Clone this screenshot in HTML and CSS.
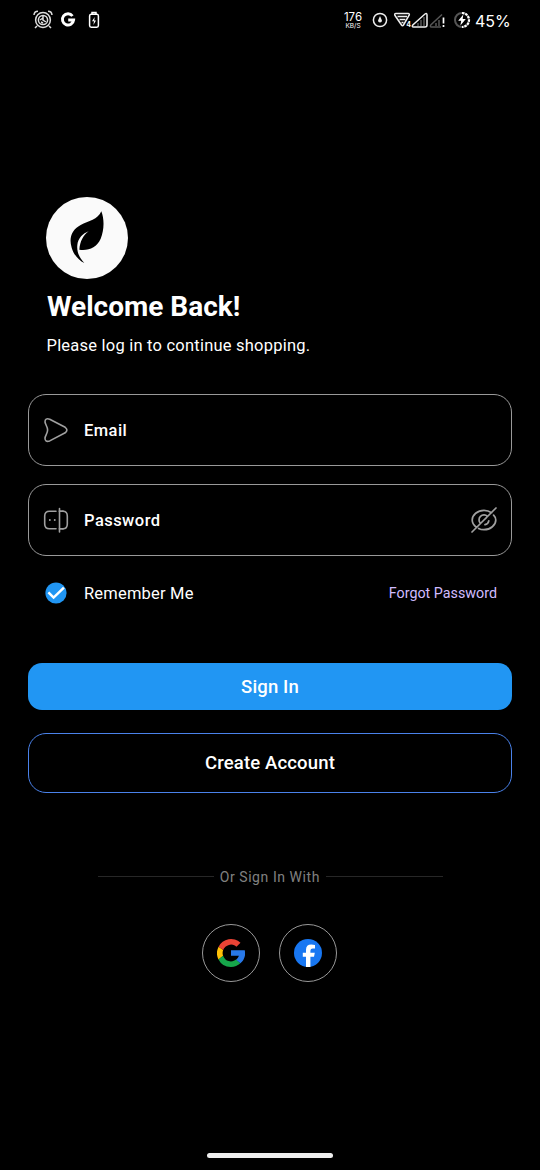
FILE: index.html
```html
<!DOCTYPE html>
<html lang="en">
<head>
<meta charset="utf-8">
<title>Sign In</title>
<link rel="stylesheet" href="styles.css">
</head>
<body>
<div class="screen">
  <header class="status">
    <div class="status-left">
      <svg width="20" height="20" viewBox="0 0 20 20" fill="none" stroke="#ddd" stroke-width="1.5"><circle cx="10" cy="10" r="7.4"/><circle cx="10" cy="10" r="4.6"/><path d="M10 6v4l3 2M7 10l3-2M10 13l-2-1M1 5a4 4 0 0 1 4-3.7M19 5a4 4 0 0 0-4-3.7M4 16l-2 2M16 16l2 2"/></svg>
      <svg class="mono-g" width="16" height="16" viewBox="0 0 16 16" fill="none" stroke="#fff" stroke-width="2.9"><path d="M12.5 4A5.6 5.6 0 1 0 13.6 8H8.2"/></svg>
      <svg class="mini-battery" width="12" height="18" viewBox="0 0 12 18" fill="none" stroke="#fff" stroke-width="1.5"><path d="M4 3V1.5h4V3M3 3.2h6Q10.4 3.2 10.4 5v9.5q0 1.7-1.6 1.7H3.2q-1.6 0-1.6-1.7V5Q1.6 3.2 3 3.2Z"/><path d="M6.7 6 4 10.3h2L5.4 14 8 9.4H6.2Z" fill="#fff" stroke="none"/></svg>
    </div>
    <div class="status-right">
      <div class="speed"><span class="speed-value">176</span><span class="speed-unit">KB/S</span></div>
      <svg class="dial" width="16" height="16" viewBox="0 0 16 16" fill="none" stroke="#eee" stroke-width="1.5"><circle cx="8" cy="8" r="6.6"/><path d="M8 4 10 8.4A2 2 0 1 1 6 8.4Z" fill="#eee" stroke="none"/></svg>
      <svg class="signals" width="52" height="18" viewBox="0 0 52 18" fill="none" stroke="#eee" stroke-width="1.5"><path d="M2 2.5H14Q16 2.5 15 4.5L9.5 14Q8.5 15.5 7.5 14L1 4.5Q0 2.5 2 2.5ZM3.5 5.5h9.5M5.5 8.5h5.8M7.5 11.4h2"/><path d="M19.5 16H31q2 0 2-2V4q0-2.4-2-1L18.8 14Q17.5 16 19.5 16Z"/><path d="M24 12v3M27 9v6M30 6v9M42 12v3M45 9v6" stroke="#555"/><path d="M48 3.5 37 13.7Q35.5 16 37.5 16H47" stroke="#555"/><path d="M49.5 6.5v6M49.5 14v2" stroke="#fff" stroke-width="1.7"/><text class="network" x="12.2" y="16.4">4</text></svg>
      <svg class="charge" width="18" height="18" viewBox="0 0 18 18" fill="none"><circle cx="9" cy="9" r="7" stroke="#555" stroke-width="2"/><path d="M9 2A7 7 0 0 1 9 16" stroke="#fff" stroke-width="2.2" stroke-dasharray="2.4 1"/><path d="M10.3 3.5 5.2 9.8h3L7.4 14.6 12.8 8H9.7Z" fill="#fff"/></svg>
      <span class="percent">45%</span>
    </div>
  </header>

  <main class="content">
    <section class="intro">
      <svg class="logo" viewBox="34 36 246 246"><circle cx="157" cy="159" r="123" fill="#fafafa"/><path d="M200 79C190 104 161 108 138 120C111 134 102 160 111 188C117 209 132 226 149 234C133 216 126 201 128 180C130 160 145 145 162 139C146 151 136 168 134 194C161 198 186 188 198 161C208 137 210 105 200 79Z"/></svg>
      <h1 class="title">Welcome Back!</h1>
      <p class="subtitle">Please log in to continue shopping.</p>
    </section>

    <div class="field">
      <svg class="field-icon" width="28" height="28" viewBox="0 0 28 28" fill="none" stroke="#a0a0a0" stroke-width="1.6" stroke-linejoin="round"><path d="M7.7 3.2 23.2 11.3Q26.6 14 23.2 16.8L7.7 24.9Q3 26.5 3 22.2C3.2 19.7 5.6 17.5 5.6 14S3.2 8.6 3 5.9Q3 1.7 7.7 3.2Z"/></svg>
      <span class="label">Email</span>
    </div>
    <div class="field">
      <svg class="field-icon" width="28" height="28" viewBox="0 0 28 28" fill="none" stroke="#a0a0a0" stroke-width="1.6" stroke-linecap="round"><path d="M14 22.8H7.5Q2.7 22.8 2.7 18V10Q2.7 5.2 7.5 5.2H14M21 5.2Q25.3 5.2 25.3 10V18Q25.3 22.8 21 22.8M17.5 2.5v23.5"/><path d="M17.5 5.2H21M17.5 22.8H21M7.8 14h.1M12.7 14h.1" stroke-width="1.8"/></svg>
      <span class="label">Password</span>
      <svg class="eye" width="28" height="28" viewBox="0 0 28 28" fill="none" stroke="#a0a0a0" stroke-width="1.7" stroke-linecap="round"><path d="M21.6 6.7C19.6 5.3 17 4.3 14 4.3C7.5 4.3 2.2 9 2.2 14C2.2 16.8 3.8 19.3 6.4 21.2M23.6 9.2C25 10.6 25.8 12.3 25.8 14C25.8 19 20.5 23.7 14 23.7C11.8 23.7 10 23.2 8.6 22.4M17.5 10.4A4.9 4.9 0 0 0 10.5 17.5M18.8 14.8A4.9 4.9 0 0 1 15 18.7M14 14l2.2-2.2M26 2 2 26"/></svg>
    </div>

    <div class="options">
      <svg class="check" width="22" height="22" viewBox="0 0 22 22" fill="none"><circle cx="11" cy="11" r="10.6" fill="#2196f3"/><path d="M3.4 10.4 8.6 15.6 18.9 5.6" stroke="#fff" stroke-width="2.5"/></svg>
      <span class="remember">Remember Me</span>
      <a class="forgot">Forgot Password</a>
    </div>

    <button class="btn primary">Sign In</button>
    <button class="btn outline">Create Account</button>

    <div class="divider"><span class="rule"></span><span class="divider-text">Or Sign In With</span><span class="rule"></span></div>

    <div class="social">
      <button class="round">
        <svg width="28" height="28" viewBox="2 2 44 44"><path fill="#ffc107" d="M4.5 14.1A22 22 0 0 0 4.3 34.1L11.6 28.5A13.2 13.2 0 0 1 11.7 19.3Z"/><path fill="#ea4335" d="m4.5 14.1 7.2 5.2A13.2 13.2 0 0 1 32.6 14l6.3-6.3A22 22 0 0 0 4.5 14.1Z"/><path fill="#16a64a" d="M24 46a22 22 0 0 0 14.8-5.8L32 34.4A13.1 13.1 0 0 1 11.6 28.5l-7.3 5.6A22 22 0 0 0 24 46Z"/><path fill="#2878e8" d="M45.6 19.6H24v8.8h12.5a13.3 13.3 0 0 1-4.5 6.1l6.8 5.8A21.5 21.5 0 0 0 45.6 19.6Z"/></svg>
      </button>
      <button class="round">
        <svg width="28" height="28" viewBox="0 0 28 28"><circle cx="14" cy="14" r="14" fill="#1877f2"/><path fill="#fff" d="M12 28V17.8H8.8V13.8H12V10.7Q12 5.5 17.3 5.5Q19.2 5.5 21 6V9.6H18.8Q16.4 9.6 16.4 11.8V13.8H20.8L20 17.8H16.4V28Z"/></svg>
      </button>
    </div>
  </main>
  <div class="home-bar"></div>
</div>
</body>
</html>
```
FILE: styles.css
```css
* { box-sizing: border-box; }
body { margin: 0; background: #000; color: #fff; font-family: Roboto, sans-serif; }
svg { display: block; flex: none; }
.screen { width: 540px; height: 1170px; display: flex; flex-direction: column; overflow: hidden; }
.status { height: 40px; display: flex; justify-content: space-between; padding: 0 30px 0 33px; }
.status-left, .status-right { display: flex; align-items: center; }
.mono-g { margin-left: 7px; }
.mini-battery { margin-left: 12px; }
.speed { width: 20px; display: flex; flex-direction: column; align-items: center; }
.speed-value { font: 11.5px/11px Inter, sans-serif; margin-top: 1px; }
.speed-unit { font: 6.5px/7px Inter, sans-serif; }
.dial { margin-left: 9px; }
.signals { margin-left: 6px; }
.network { font: bold 7px Inter, sans-serif; fill: #fff; stroke: none; }
.charge { margin-left: 7px; }
.percent { margin-left: 4px; width: 35px; font: 16px/20px Inter, sans-serif; padding-top: 1px; white-space: nowrap; }
.content { flex: 1; padding: 157px 28px 0; display: flex; flex-direction: column; }
.intro { padding-left: 18px; }
.logo { width: 82px; height: 82px; }
.title { margin: 10px 0 0 1px; font-size: 28px; line-height: 36px; font-weight: 700; }
.subtitle { margin: 9px 0 0 0.5px; font-size: 16.5px; line-height: 24px; letter-spacing: .22px; }
.field { height: 72px; border: 1px solid #999; border-radius: 18px; display: flex; align-items: center; padding: 0 13px 0 13px; }
.intro + .field { margin-top: 36px; }
.field + .field { margin-top: 18px; }
.label { margin-left: 14px; font-size: 16.5px; font-weight: 500; letter-spacing: .45px; }
.eye { margin-left: auto; }
.options { height: 24px; margin-top: 25px; padding: 0 15px 0 17px; display: flex; align-items: center; }
.remember { margin-left: 17px; font-size: 16.5px; letter-spacing: .2px; }
.forgot { margin-left: auto; font-size: 14.3px; letter-spacing: 0; color: #d0bcff; }
.btn { font: 500 18.5px Roboto, sans-serif; letter-spacing: .15px; color: #fff; padding: 0; width: 100%; }
.primary { margin-top: 58px; height: 47px; border: 0; border-radius: 14px; background: #2196f3; }
.outline { margin-top: 23px; height: 60px; border: 1px solid #4a82ea; border-radius: 18px; background: #000; }
.divider { margin: 74px 69px 0 70px; height: 20px; display: flex; align-items: center; gap: 6px; }
.rule { flex: 1; height: 1px; margin-bottom: 1px; background: #272727; }
.rule:last-child { flex: 0 0 117px; }
.divider-text { font-size: 14px; letter-spacing: .57px; color: #808080; }
.social { margin: 37px 2px 0 0; display: flex; justify-content: center; gap: 19px; }
.round { width: 58px; height: 58px; padding: 0; border: 1px solid #999; border-radius: 50%; background: #000; display: flex; align-items: center; justify-content: center; }
.home-bar { width: 126px; height: 5px; margin: 0 auto 12px; border-radius: 3px; background: #eee; }
```
